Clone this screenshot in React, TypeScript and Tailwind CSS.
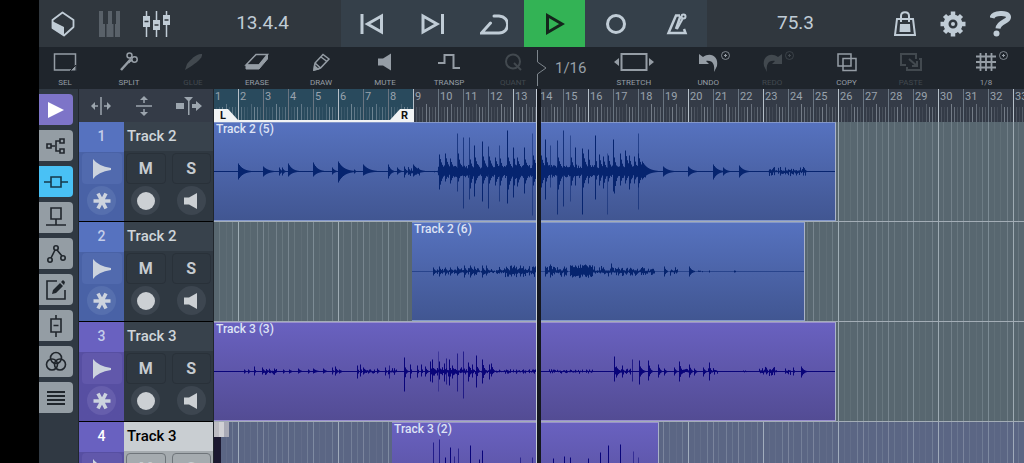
import React from "react";

type Hit = [x: number, up: number, down: number, decay?: number, alpha?: number];

type Clip = {
  name: string;
  left: number;
  width: number;
  from: number;
  line: number;
  bursts: [number, number, number][];
  hits: Hit[];
};

type Track = {
  id: number;
  name: string;
  tone: "blue" | "purple";
  selected?: boolean;
  clip: Clip;
};

const BAR = 25;
const BAR_COUNT = 33;
const BRIGHT_BARS = [2, 6, 9, 13, 16, 20, 23, 26, 30, 33];

const TRACKS: Track[] = [
  {
    id: 1,
    name: "Track 2",
    tone: "blue",
    clip: {
      name: "Track 2 (5)",
      left: 0,
      width: 622,
      from: 0,
      line: 1,
      bursts: [
        [224, 431, 6],
        [554, 574, 4],
        [575, 592, 4],
        [194, 206, 4],
        [220, 224, 1],
      ],
      hits: [
        [24, 8, 8, 6], [49, 5, 5, 6], [65, 4, 4, 2], [68, 4, 4, 2], [74, 8, 5, 5], [99, 9, 5, 5],
        [118, 4, 3, 3], [124, 10, 11, 7], [140, 2, 2, 2], [149, 7, 4, 7], [174, 7, 7, 3], [183, 4, 3, 3],
        [190, 5, 6, 2], [199, 7, 5, 6],
        [225, 17, 18, 4], [231, 18, 10, 4], [236, 13, 12, 4], [243, 38, 20, 1, 0.7], [244, 18, 10, 3],
        [249, 34, 37, 1, 0.7], [255, 34, 28, 1, 0.7], [256, 12, 17, 3], [260, 26, 25, 1], [261, 14, 12, 4],
        [268, 30, 30, 1], [269, 15, 12, 4], [274, 25, 37, 1, 0.8], [275, 15, 12, 4], [281, 14, 14, 4],
        [285, 26, 30, 0.5, 0.6], [286, 13, 14, 3], [293, 41, 32, 1], [294, 14, 18, 4], [299, 24, 26, 2],
        [303, 14, 15, 4], [310, 24, 22, 1], [311, 12, 12, 4], [318, 38, 44, 1, 0.5], [319, 16, 14, 4],
        [327, 16, 16, 4], [331, 32, 28, 1], [332, 14, 10, 3], [336, 26, 16, 1, 0.6], [343, 31, 43, 1, 0.8],
        [344, 14, 18, 4], [349, 41, 35, 1, 0.8], [356, 36, 30, 1, 0.5], [357, 14, 14, 3], [361, 24, 14, 1],
        [368, 23, 43, 1], [369, 18, 16, 4], [374, 22, 12, 2], [381, 36, 28, 1], [385, 17, 14, 3],
        [389, 15, 17, 3], [393, 18, 43, 0.5, 0.5], [394, 16, 10, 3], [399, 32, 20, 1], [400, 14, 22, 3],
        [406, 18, 14, 3], [411, 21, 12, 4], [415, 16, 18, 3], [420, 15, 12, 3], [424, 18, 16, 4],
        [424, 38, 38, 0.5, 0.6], [428, 10, 8, 7], [449, 5, 5, 6], [474, 5, 5, 5], [499, 7, 8, 5],
        [509, 4, 4, 4], [525, 6, 6, 5],
      ],
    },
  },
  {
    id: 2,
    name: "Track 2",
    tone: "blue",
    clip: {
      name: "Track 2 (6)",
      left: 198,
      width: 393,
      from: 198,
      line: 0.5,
      bursts: [
        [219, 282, 3],
        [282, 324, 5],
        [331, 352, 5],
        [356, 378, 6],
        [378, 405, 5],
        [406, 440, 4],
        [456, 463, 4],
        [484, 488, 1],
      ],
      hits: [
        [219, 4, 4, 2], [225, 5, 5, 2], [231, 4, 4, 2], [236, 4, 4, 2], [243, 5, 4, 3], [250, 6, 6, 2],
        [256, 6, 6, 3], [260, 5, 4, 2], [268, 6, 6, 2], [272, 6, 4, 2], [297, 6, 5, 2], [300, 6, 4, 2],
        [306, 6, 5, 2], [331, 5, 5, 2], [336, 7, 6, 2], [350, 5, 5, 2], [358, 6, 6, 2], [366, 7, 6, 2],
        [371, 7, 5, 2], [376, 6, 5, 2], [397, 8, 3, 1], [404, 4, 4, 2], [450, 5, 5, 2], [475, 5, 5, 3],
        [495, 1, 1, 2], [520, 1, 1, 4],
      ],
    },
  },
  {
    id: 3,
    name: "Track 3",
    tone: "purple",
    clip: {
      name: "Track 3 (3)",
      left: 0,
      width: 622,
      from: 0,
      line: 1,
      bursts: [
        [48, 62, 3],
        [150, 160, 2],
        [174, 182, 3],
        [216, 238, 5],
        [238, 258, 4],
        [258, 282, 3],
        [282, 322, 2],
        [334, 368, 2],
        [372, 378, 2],
        [405, 416, 3],
        [465, 476, 3],
        [494, 503, 3],
        [528, 532, 1],
        [545, 562, 4],
        [571, 576, 3],
      ],
      hits: [
        [30, 2, 2, 2], [34, 2, 2, 2], [40, 5, 4, 1], [48, 4, 3, 2], [60, 3, 3, 2], [69, 2, 2, 2],
        [75, 2, 2, 3], [84, 3, 2, 3], [94, 2, 2, 2], [99, 3, 2, 4], [109, 3, 2, 3], [118, 4, 3, 1],
        [121, 5, 4, 2], [125, 2, 2, 3], [143, 6, 7, 1], [146, 7, 5, 1], [149, 4, 3, 3], [163, 3, 2, 2],
        [171, 4, 4, 1], [175, 6, 7, 1, 0.7], [190, 14, 20, 1], [191, 4, 4, 2], [196, 7, 7, 1], [203, 6, 6, 1],
        [207, 7, 5, 1], [211, 5, 5, 2], [216, 10, 10, 1], [218, 12, 11, 1], [224, 20, 20, 0.5, 0.4],
        [225, 10, 8, 1], [230, 8, 10, 1], [232, 13, 13, 1, 0.7], [235, 12, 14, 1], [238, 6, 7, 2],
        [243, 18, 20, 0.5, 0.7], [249, 20, 27, 0.5, 0.7], [254, 9, 10, 2], [258, 7, 6, 1], [262, 16, 16, 1],
        [268, 12, 12, 2], [275, 7, 8, 1], [277, 8, 5, 2], [400, 15, 10, 1], [402, 5, 6, 3], [408, 6, 6, 1],
        [418, 12, 10, 0.5, 0.7], [425, 11, 13, 1], [426, 5, 5, 3], [434, 11, 9, 2], [444, 7, 6, 2],
        [450, 3, 4, 2], [460, 4, 4, 2], [465, 10, 10, 2], [475, 7, 6, 2], [480, 3, 4, 2], [489, 4, 5, 2],
        [495, 9, 9, 1], [579, 4, 4, 1], [587, 5, 6, 3],
      ],
    },
  },
  {
    id: 4,
    name: "Track 3",
    tone: "purple",
    selected: true,
    clip: {
      name: "Track 3 (2)",
      left: 178,
      width: 267,
      from: 178,
      line: 1,
      bursts: [
        [216, 330, 5],
        [380, 430, 5],
      ],
      hits: [
        [219, 29, 20, 0.5, 0.7], [225, 32, 24, 0.5, 0.7], [231, 14, 12, 1], [236, 24, 20, 1],
        [240, 15, 12, 1, 0.6], [244, 23, 18, 1, 0.6], [256, 26, 20, 1], [265, 12, 12, 1],
        [268, 21, 18, 1], [306, 14, 12, 1, 0.6], [318, 14, 12, 1, 0.6], [339, 13, 10, 1],
        [350, 15, 10, 1], [356, 14, 12, 1], [374, 13, 10, 1], [386, 19, 14, 1], [394, 26, 20, 1],
        [406, 27, 22, 1], [419, 20, 16, 1, 0.5], [424, 14, 12, 1, 0.5],
      ],
    },
  },
];

// stable pseudo random, so the wave looks the same on every render
const noise = (n: number) => {
  const v = Math.sin(n * 12.9898) * 43758.5453;
  return v - Math.floor(v);
};

// loud parts keep a solid body, quiet parts break up into single peaks
const burst = (n: number, h: number) => (h >= 6 ? h * (0.5 + noise(n) * 0.6) : h * (0.15 + noise(n) ** 2));

const Wave = ({ clip, color }: { clip: Clip; color: string }) => {
  const mid = 48.5;
  let d = "";
  for (let x = 0; x < clip.width; x++) {
    const t = x + clip.from;
    let up = 0;
    let down = 0;
    clip.hits.forEach(([hx, u, dn, decay = 2, alpha = 1]) => {
      if (alpha < 1 || t < hx || t > hx + decay * 4) return;
      const k = Math.exp(-(t - hx) / (decay * 0.8));
      up = Math.max(up, u * k);
      down = Math.max(down, dn * k);
    });
    clip.bursts.forEach(([a, b, h]) => {
      if (t < a || t > b) return;
      up = Math.max(up, burst(t, h));
      down = Math.max(down, burst(t + 500, h));
    });
    if (up > 0.6 || down > 0.6) d += `M${x + 0.5} ${mid - up}V${mid + down}`;
  }
  return (
    <svg className="absolute inset-0 h-full w-full" aria-hidden="true">
      <rect x="0" y="48" width="100%" height="1" fill={color} opacity={clip.line} />
      <path d={d} stroke={color} strokeWidth="1" />
      {clip.hits
        .filter((h) => h[4] !== undefined)
        .map(([hx, u, dn, , alpha]) => (
          <path key={hx} d={`M${hx - clip.from + 0.5} ${mid - u}V${mid + dn}`} stroke={color} opacity={alpha} />
        ))}
    </svg>
  );
};

const SUB_LINES: [number, number][] = [
  [0, 0.35], [6, 0.07], [12, 0.07], [19, 0.22], [25, 0.3], [30, 0.14], [38, 0.25],
  [44, 0.15], [50, 0.3], [56, 0.15], [63, 0.06], [69, 0.2],
];

const LaneGrid = ({ id }: { id: number }) => (
  <svg className="absolute inset-0 h-full w-full" aria-hidden="true">
    <defs>
      <pattern id={`grid${id}`} x="24" width="75" height="100" patternUnits="userSpaceOnUse">
        {SUB_LINES.map(([x, o]) => (
          <rect key={x} x={x} width="1" height="100" fill="#c3d0d8" opacity={o} />
        ))}
      </pattern>
    </defs>
    <rect width="100%" height="100%" fill={`url(#grid${id})`} />
    {BRIGHT_BARS.map((b) => (
      <rect key={b} x={(b - 1) * BAR - 1} width="1" height="100%" fill="#c3d0d8" opacity="0.5" />
    ))}
  </svg>
);

const Ruler = () => (
  <div className="relative h-[33px] overflow-hidden bg-[#343b47]">
    <div className="absolute inset-y-0 left-0 w-[199px] bg-[#294a5d]" />
    <svg className="absolute inset-0 h-full w-full" aria-hidden="true">
      <defs>
        <pattern id="ticks" x="24" width="75" height="33" patternUnits="userSpaceOnUse">
          {Array.from({ length: 24 }, (_, i) => (
            <rect
              key={i}
              x={Math.round(i * 3.125)}
              y={i % 4 === 0 ? 15 : 18}
              width="1"
              height="18"
              fill="#b4bec8"
              opacity={[0.15, 0.35, 0.2, 0.1, 0.25, 0.5, 0.4][i % 7]}
            />
          ))}
        </pattern>
      </defs>
      <rect width="100%" height="100%" fill="url(#ticks)" />
    </svg>
    <div className="relative -ml-px flex h-full">
      {Array.from({ length: BAR_COUNT }, (_, i) => (
        <span
          key={i}
          className={`w-[25px] shrink-0 border-l pl-px text-[11px] leading-4 text-[#9aa3ad] ${
            BRIGHT_BARS.includes(i + 1) ? "border-[#b5bfc8]" : "border-[#6a7581]"
          }`}
        >
          {i + 1}
        </span>
      ))}
    </div>
    <svg className="absolute bottom-0 left-0" width="200" height="13">
      <path d="M0 0H14L24 11H176L186 0H200V13H0Z" fill="#f1f3f4" />
      <text x="6" y="10" className="text-[11px] font-bold" fill="#111">L</text>
      <text x="187" y="10" className="text-[11px] font-bold" fill="#111">R</text>
    </svg>
  </div>
);

const Lane = ({ track }: { track: Track }) => {
  const { clip, tone, selected } = track;
  const blue = tone === "blue";
  return (
    <div
      className={`relative h-[100px] shrink-0 overflow-hidden border-b border-[#a3adb6] ${
        selected ? "bg-[#5b6684]" : "bg-[#586770]"
      }`}
    >
      <LaneGrid id={track.id} />
      {selected && (
        <>
          <div className="absolute left-0 top-[15px] h-full w-[7px] bg-[#1b1830]" />
          <div className="absolute left-0 top-0 flex h-[15px] w-[15px]">
            <div className="flex-1 bg-[#bcbcc2]" />
            <div className="flex-1 bg-[#d0d0d4]" />
            <div className="flex-1 bg-[#a9aab6]" />
          </div>
        </>
      )}
      <div
        className={`absolute top-0 h-[99px] overflow-hidden border-r border-t border-b border-r-[#a9b2c8] bg-gradient-to-b ${
          blue
            ? "border-y-[#8397cb] from-[#5672bf] to-[#415692]"
            : "border-y-[#9a90cf] from-[#6961c0] to-[#534c94]"
        }`}
        style={{ left: clip.left, width: clip.width }}
      >
        <Wave clip={clip} color={blue ? "#06246f" : "#09047a"} />
        <span className="relative block pl-0.5 text-[12px] font-medium leading-[13px] text-[#dde3f5]">
          {clip.name}
        </span>
      </div>
    </div>
  );
};

const TrackHeader = ({ track }: { track: Track }) => {
  const { selected, tone } = track;
  const blue = tone === "blue";
  const box = `flex h-[31px] items-center justify-center rounded border ${
    selected ? "border-[#6f757a] bg-[#a5abaf]" : "border-[#293139] bg-[#2f3841]"
  }`;
  const round = `flex h-[29px] w-[29px] items-center justify-center rounded-full ${
    selected ? "bg-[#92999e]" : "bg-[#3d4650]"
  }`;
  return (
    <div className="flex h-[100px] shrink-0 border-b border-black">
      <div
        className={`flex w-[45px] shrink-0 flex-col items-center bg-gradient-to-b ${
          blue ? "from-[#5672bf] from-30% to-[#4962a6] to-30%" : "from-[#6961c0] from-30% to-[#574fa2] to-30%"
        }`}
      >
        <span
          className={`h-[29px] text-[14px] font-medium leading-[29px] ${selected ? "text-white" : "text-[#c3cdea]"}`}
        >
          {track.id}
        </span>
        <button
          aria-label="Preset"
          className={`mt-0.5 flex h-[31px] w-10 items-center justify-center rounded ${blue ? "bg-[#516aae]" : "bg-[#6158ab]"}`}
        >
          <svg width="18" height="20" viewBox="0 0 18 20" fill="#ccd3de">
            <path d="M0 0Q5 7 18 9V11Q5 13 0 20Z" />
          </svg>
        </button>
        <button
          aria-label="Freeze"
          className={`mt-0.5 flex h-[29px] w-[29px] items-center justify-center rounded-full ${blue ? "bg-[#566fae]" : "bg-[#665eac]"}`}
        >
          <svg width="18" height="18" viewBox="0 0 18 18" stroke="#ccd3de" strokeWidth="3.600">
            <path d="M0.500 9H17.500M5 1.500L13 16.500M13 1.500L5 16.500" />
          </svg>
        </button>
      </div>
      <div className={`flex-1 ${selected ? "bg-[#a5abaf]" : "bg-[#2f3841]"}`}>
        <div
          className={`h-[29px] pl-[3px] text-[15px] font-medium leading-7 ${
            selected ? "bg-[#c9ced2] text-black" : "bg-[#38424c] text-[#cfd5da]"
          }`}
        >
          {track.name}
        </div>
        <div className="mt-0.5 grid grid-cols-2 gap-x-1.5 gap-y-0.5 px-0.5">
          <button className={`${box} text-base font-bold text-[#c6cbd0]`}>M</button>
          <button className={`${box} text-base font-bold text-[#c6cbd0]`}>S</button>
          <button aria-label="Record arm" className={`${round} justify-self-center`}>
            <span className="h-[18px] w-[18px] rounded-full bg-[#ccd0d4]" />
          </button>
          <button aria-label="Monitor" className={`${round} justify-self-center`}>
            <svg width="14" height="16" viewBox="0 0 14 16" fill="#ccd0d4">
              <path d="M0 4.500H5L13 0V16L5 11.500H0Z" />
            </svg>
          </button>
        </div>
      </div>
    </div>
  );
};

const SIDE: { label: string; style: string; icon: React.ReactNode }[] = [
  { label: "Play mode", style: "bg-[#7d74c8] text-white", icon: <path d="M5 5L21 13L5 21Z" fill="currentColor" stroke="none" /> },
  {
    label: "Routing",
    style: "bg-[#949da4] text-[#20262c]",
    icon: <path d="M4 11H8V15H4ZM17 6H21V10H17ZM17 16H21V20H17ZM8 13H12M17 8H13V18H17" />,
  },
  { label: "Inserts", style: "bg-[#49c1f5] text-[#16384a]", icon: <path d="M8 8H18V18H8ZM1 13H8M18 13H25" /> },
  { label: "Sends", style: "bg-[#949da4] text-[#20262c]", icon: <path d="M8 3H18V14H8ZM13 14V20M3 20H23" /> },
  {
    label: "Automation",
    style: "bg-[#949da4] text-[#20262c]",
    icon: (
      <>
        <circle cx="7" cy="19" r="2.200" />
        <circle cx="13" cy="7" r="2.200" />
        <circle cx="20" cy="17" r="2.200" />
        <path d="M8 17L12 9M14 9L19 15" />
      </>
    ),
  },
  {
    label: "Edit",
    style: "bg-[#949da4] text-[#20262c]",
    icon: (
      <>
        <path d="M14 4H4V22H22V13" />
        <path d="M9 17L10 13L17 6L20 9L13 16ZM18 5L20 3L22 5L21 8Z" fill="currentColor" stroke="none" />
      </>
    ),
  },
  { label: "Channel", style: "bg-[#949da4] text-[#20262c]", icon: <path d="M8 6H18V19H8ZM13 2V6M13 19V24M10.500 12.500H15.500" /> },
  {
    label: "Colors",
    style: "bg-[#949da4] text-[#20262c]",
    icon: (
      <>
        <circle cx="13" cy="9" r="5.500" />
        <circle cx="9" cy="15.500" r="5.500" />
        <circle cx="17" cy="15.500" r="5.500" />
      </>
    ),
  },
  { label: "Menu", style: "bg-[#949da4] text-[#20262c]", icon: <path d="M4 7H22M4 11H22M4 15H22M4 19H22" strokeWidth="2" /> },
];

const Plus = () => (
  <svg className="absolute right-0 top-1" width="9" height="9" viewBox="0 0 9 9" fill="none" stroke="currentColor">
    <circle cx="4.500" cy="4.500" r="4" strokeWidth="0.800" />
    <path d="M4.500 3V6M3 4.500H6" />
  </svg>
);

const Tool = ({
  label,
  off,
  plus,
  className = "",
  children,
}: {
  label: string;
  off?: boolean;
  plus?: boolean;
  className?: string;
  children: React.ReactNode;
}) => (
  <button
    className={`relative flex w-11 shrink-0 flex-col items-center ${off ? "text-[#42494f]" : "text-[#959da5]"} ${className}`}
  >
    <svg className="mt-1" width="40" height="22" viewBox="0 0 40 22" fill="none" stroke="currentColor" strokeWidth="1.500">
      {children}
    </svg>
    <span className="mt-[5px] text-[8px] leading-[10px]">{label}</span>
    {plus && <Plus />}
  </button>
);

const Toolbar = () => (
  <div className="flex h-[42px] shrink-0 items-stretch bg-[#1f252c] pl-1 pr-4">
    <div className="flex gap-5">
      <Tool label="SEL">
        <path d="M9.500 3H30.500V19H9.500Z" />
        <path d="M31 14V20H25Z" fill="currentColor" stroke="#1f252c" strokeWidth="1" />
      </Tool>
      <Tool label="SPLIT">
        <circle cx="20.500" cy="4.500" r="2.500" />
        <circle cx="25.500" cy="8.500" r="2.700" />
        <path d="M21.500 7L20 12M23.500 9L18 12" />
        <path d="M21 9L12 19" strokeWidth="2.500" />
      </Tool>
      <Tool label="GLUE" off>
        <path d="M12 19L14 13C18 8 24 2 29 3C30 7 23 12 17 16Z" fill="currentColor" stroke="none" />
      </Tool>
      <Tool label="ERASE">
        <path d="M9 14L19 3.500H30.500L22 14Z" />
        <path d="M9 14H22L30.500 4V8L22 18H9Z" fill="currentColor" strokeWidth="1" />
      </Tool>
      <Tool label="DRAW">
        <path d="M13 19L14 12L22 3.500L28 8L19.500 17ZM20 6L26 10.500M14 12L19.500 17" />
        <path d="M13 19L13.500 15L17 18Z" fill="currentColor" />
      </Tool>
      <Tool label="MUTE">
        <path d="M13 7.500H18L26 2.500V19.500L18 14.500H13Z" fill="currentColor" stroke="none" />
      </Tool>
      <Tool label="TRANSP">
        <path d="M9 12H15.500V4H24.500V17H31" strokeWidth="2" />
      </Tool>
      <Tool label="QUANT" off>
        <circle cx="20" cy="10.500" r="7" strokeWidth="2" />
        <path d="M21 12L28 19" strokeWidth="2" />
      </Tool>
    </div>
    <button className="ml-0.5 flex items-center gap-2 text-[15px] text-[#98a0a8]">
      <svg width="10" height="38" viewBox="0 0 10 38" fill="none" stroke="#7d858c">
        <path d="M0.500 1V13L9 19L0.500 25V37" />
      </svg>
      1/16
    </button>
    <div className="min-w-0 flex-[25]" />
    <Tool label="STRETCH">
      <path d="M7.500 3H32.500V19H7.500Z" strokeWidth="2" />
      <path d="M0 11L5 7V15ZM40 11L35 7V15Z" fill="currentColor" stroke="none" />
    </Tool>
    <div className="min-w-0 flex-[30]" />
    <Tool label="UNDO" plus>
      <path d="M11 3L15 6C22 1 31 5 29 15L26 21C27 14 25 9 18 10L21 13L11 13Z" fill="currentColor" stroke="none" />
    </Tool>
    <Tool label="REDO" off plus className="ml-5">
      <path d="M30 3L26 6C19 1 10 5 12 15L15 21C14 14 16 9 23 10L20 13L30 13Z" fill="currentColor" stroke="none" />
    </Tool>
    <div className="min-w-0 flex-[30]" />
    <Tool label="COPY">
      <path d="M11 3H24V15H11ZM16 7.500H29V19.500H16Z" />
    </Tool>
    <Tool label="PASTE" off className="ml-5">
      <path d="M15 14H10V3H25V8M28 8H30V19H16V16M18 8L26 15M26 10V15H21" strokeWidth="2" />
    </Tool>
    <div className="min-w-0 flex-[31]" />
    <Tool label="1/8" plus>
      <path d="M14.500 2V20M20 2V20M25.500 2V20M10 5.500H30M10 11H30M10 16.500H30" strokeWidth="1.800" />
    </Tool>
  </div>
);

const TRANSPORT: { label: string; icon: React.ReactNode; active?: boolean }[] = [
  { label: "Rewind", icon: <path d="M4 4V24M23.500 6V22L9.500 14Z" /> },
  { label: "Forward", icon: <path d="M23.500 4V24M4 6V22L18 14Z" /> },
  { label: "Loop", icon: <path d="M14 6H19C31 7 30 23 19 23H1.500L10.500 13" strokeLinecap="round" /> },
  { label: "Play", icon: <path d="M6.500 5.500V22.500L21 14Z" />, active: true },
  { label: "Record", icon: <circle cx="14" cy="14" r="8.500" /> },
  {
    label: "Metronome",
    icon: (
      <>
        <path d="M17 5.500H13L5.500 23H22.500L21 19M13 19L17.500 6" strokeWidth="2.500" />
        <path d="M14 19L19.500 9" strokeWidth="2" />
        <circle cx="20.500" cy="6.500" r="2" strokeWidth="2" />
      </>
    ),
  },
];

const TopBar = () => (
  <div className="flex h-[47px] shrink-0 bg-[#30373e] text-[#c0ccd6]">
    <div className="flex w-[302px] shrink-0 items-center">
      <button aria-label="Projects" className="ml-3">
        <svg width="24" height="26" viewBox="0 0 24 26" fill="none" stroke="currentColor" strokeWidth="1.800">
          <path d="M11.500 1.500L22.500 9V16L13 24.500L1.500 17V9Z" strokeLinejoin="round" />
          <path d="M1 10L13 16V25L1 17Z" fill="currentColor" stroke="none" />
        </svg>
      </button>
      <button aria-label="Keyboard" className="ml-6 text-[#596169]">
        <svg width="21" height="26" viewBox="0 0 21 26" fill="currentColor">
          <path d="M0 0H4V13H6V26H0ZM9 0H13V13H14.500V26H7.500V13H9ZM17 0H21V26H16V13H17Z" />
        </svg>
      </button>
      <button aria-label="Mixer" className="ml-[22px]">
        <svg width="28" height="26" viewBox="0 0 28 26">
          <path d="M4.500 0V26M14.500 0V26M24.500 0V26" stroke="currentColor" strokeWidth="1.500" />
          <path d="M1 5H8V16H1ZM11 9H18V19H11ZM21 4H28V14H21Z" fill="currentColor" />
          <path d="M2.500 10.500H6.500M12.500 14H16.500M22.500 9H26.500" stroke="#30373e" strokeWidth="1.500" />
        </svg>
      </button>
      <span className="flex-1 pl-3.5 text-center text-[19px]">13.4.4</span>
    </div>
    <div className="flex shrink-0 bg-[#35404a]">
      {TRANSPORT.map((t) => (
        <button
          key={t.label}
          aria-label={t.label}
          className={`flex w-[61px] items-center justify-center ${t.active ? "bg-[#33b355] text-[#14251c]" : ""}`}
        >
          <svg width="28" height="28" viewBox="0 0 28 28" fill="none" stroke="currentColor" strokeWidth="3">
            {t.icon}
          </svg>
        </button>
      ))}
    </div>
    <div className="flex flex-1 items-center pr-3">
      <span className="flex-1 pr-2.5 text-center text-[19px]">75.3</span>
      <div className="flex items-center gap-6">
        <button aria-label="Shop">
          <svg width="22" height="26" viewBox="0 0 22 26" fill="none" stroke="currentColor" strokeWidth="2">
            <path d="M3 8H19L21 24H1ZM7 11V5C7 0 15 0 15 5V11" />
            <path d="M6 13H16L16.500 21H5.500Z" fill="currentColor" stroke="none" />
          </svg>
        </button>
        <button aria-label="Settings">
          <svg width="26" height="26" viewBox="0 0 26 26" fill="none" stroke="currentColor">
            <circle cx="13" cy="13" r="7" strokeWidth="5" />
            <path
              d="M13 0.500V5M13 21V25.500M0.500 13H5M21 13H25.500M4.500 4.500L7 7M19 19L21.500 21.500M4.500 21.500L7 19M19 7L21.500 4.500"
              strokeWidth="4.500"
            />
            <circle cx="13" cy="13" r="2" fill="currentColor" stroke="none" />
          </svg>
        </button>
        <button aria-label="Help">
          <svg width="22" height="26" viewBox="0 0 22 26" fill="none" stroke="currentColor" strokeWidth="5">
            <path d="M2 7C3 2 18 0.500 18.500 6C19 11 9 10 8 17.500" />
            <circle cx="6.500" cy="22.500" r="3" fill="currentColor" stroke="none" />
          </svg>
        </button>
      </div>
    </div>
  </div>
);

const App = () => {
  return (
    <div className="flex h-screen overflow-hidden bg-black pl-[39px] font-['Roboto',sans-serif]">
      <div className="flex min-w-0 flex-1 flex-col">
        <TopBar />
        <Toolbar />
        <div className="flex min-h-0 flex-1">
          <nav className="flex w-[39px] shrink-0 flex-col gap-[5px] bg-[#303943] pt-[5px]">
            {SIDE.map((s) => (
              <button
                key={s.label}
                aria-label={s.label}
                className={`flex h-[31px] w-[34px] shrink-0 items-center justify-center rounded-r ${s.style}`}
              >
                <svg width="26" height="26" viewBox="0 0 26 26" fill="none" stroke="currentColor" strokeWidth="1.600">
                  {s.icon}
                </svg>
              </button>
            ))}
          </nav>
          <div className="flex w-[136px] shrink-0 flex-col border-l border-r border-[#20262d] bg-[#2f3841]">
            <div className="flex h-[33px] shrink-0 items-center justify-around bg-[#343b47] text-[#9ca5ae]">
              <button aria-label="Zoom horizontally">
                <svg width="22" height="20" viewBox="0 0 22 20" fill="currentColor" stroke="currentColor">
                  <path d="M11 1V19M5 10H8M14 10H17" strokeWidth="1.500" />
                  <path d="M1 10L5 6V14ZM21 10L17 6V14Z" stroke="none" />
                </svg>
              </button>
              <button aria-label="Zoom vertically">
                <svg width="22" height="22" viewBox="0 0 22 22" fill="currentColor" stroke="currentColor">
                  <path d="M3 11H19M11 4V8M11 14V18" strokeWidth="1.500" />
                  <path d="M11 1L15 5H7ZM11 21L15 17H7Z" stroke="none" />
                </svg>
              </button>
              <button aria-label="Follow playhead">
                <svg width="26" height="20" viewBox="0 0 26 20" fill="currentColor">
                  <path d="M0 7H8V13H0ZM8 1H17L13.500 5V19H12V5ZM16 8H20V5L26 10L20 15V12H16Z" />
                </svg>
              </button>
            </div>
            {TRACKS.map((t) => (
              <TrackHeader key={t.id} track={t} />
            ))}
          </div>
          <div className="relative min-w-0 flex-1 overflow-hidden">
            <Ruler />
            {TRACKS.map((t) => (
              <Lane key={t.id} track={t} />
            ))}
            <div className="absolute inset-y-0 left-[322px] w-[5px] border-l border-[#c5ccd6] bg-[#15181f]" />
          </div>
        </div>
      </div>
    </div>
  );
};

export default App;
